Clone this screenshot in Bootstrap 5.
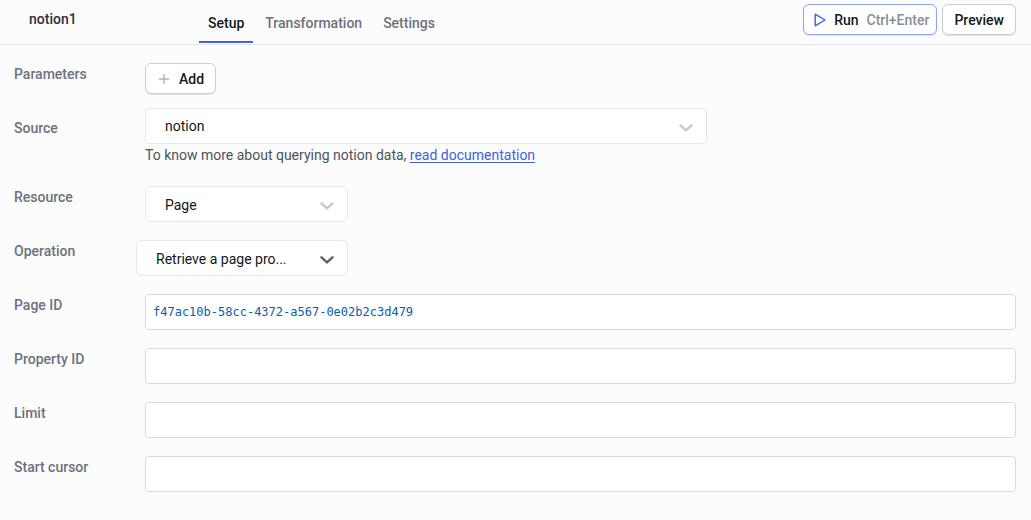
<!DOCTYPE html>
<html lang="en">
<head>
<meta charset="utf-8">
<meta name="viewport" content="width=device-width, initial-scale=1">
<title>notion1</title>
<link href="https://cdn.jsdelivr.net/npm/bootstrap@5.3.0/dist/css/bootstrap.min.css" rel="stylesheet">
<style>
  body { background: #fcfcfd; color: #11181c; font: 400 14px/20px Roboto, "Noto Sans", sans-serif; }
  .query-header { height: 45px; border-bottom: 1px solid #e2e5ea; padding: 0 15px 0 29px; }
  .query-name { width: 170px; margin-top: 9px; font-weight: 500; color: #2b2f38; }
  .query-tabs { gap: 3px; }
  .query-tabs .nav-link { padding: 13px 9px 8px; border-bottom: 2px solid transparent; color: #6a727c; font-weight: 500; }
  .query-tabs .nav-link.active { color: #11181c; border-color: #3e63dd; }
  .header-actions { gap: 5px; }
  .action-btn { height: 31px; background: #fff; border: 1px solid #c9ced4; border-radius: 6px; box-shadow: 0 1px 0 rgba(17, 24, 28, .1); color: #11181c; font-size: 14px; line-height: 20px; font-weight: 500; padding: 0 11px; }
  .action-btn.run-btn { border-color: #8da4ef; padding: 0 7px 0 10px; }
  .shortcut { color: #889096; }
  .query-form { padding: 18px 15px 18px 14px; }
  .field-row + .field-row { margin-top: 18px; }
  .field-row.source-row { margin-top: 14px; }
  .field-label { width: 131px; color: #6a727c; font-weight: 500; padding-top: 1px; }
  .source-row .field-label { padding-top: 10px; }
  .field-box.form-control, .field-box.form-select { height: 36px; border: 1px solid #d7dbdf; border-radius: 4px; background-color: #fff; font-size: 14px; line-height: 20px; color: #11181c; }
  .field-box.form-control { padding: 0 7px; color: #0b5cad; font-family: "DejaVu Sans Mono", monospace; font-size: 12px; }
  .field-box.form-select { border-color: #e6e8eb; border-radius: 6px; padding: 2px 40px 0 19px; background-position: right 13px top 15px; background-size: 14px 8px;
    background-image: url("data:image/svg+xml,%3Csvg xmlns='http://www.w3.org/2000/svg' viewBox='0 0 14 8'%3E%3Cpath d='M1.5 1.3 7 6.3l5.5-5' fill='none' stroke='%23c8c8c8' stroke-width='2.4' stroke-linecap='round'/%3E%3C/svg%3E"); }
  .field-box.form-select.select-source { max-width: 562px; padding-top: 0; border-radius: 4px; }
  .field-box.form-select.select-resource { width: 203px; }
  .field-box.form-select.select-operation { width: 212px; margin-left: -9px;
    background-image: url("data:image/svg+xml,%3Csvg xmlns='http://www.w3.org/2000/svg' viewBox='0 0 14 8'%3E%3Cpath d='M1.5 1.3 7 6.3l5.5-5' fill='none' stroke='%23616161' stroke-width='2.4' stroke-linecap='round'/%3E%3C/svg%3E"); }
  .source-help { margin-top: 1px; height: 23px; color: #4b535b; }
  .source-help a { color: #3e63dd; text-underline-offset: 2px; }
</style>
</head>
<body>
<header class="query-header d-flex">
  <div class="query-name">notion1</div>
  <nav class="query-tabs nav flex-nowrap align-items-start" aria-label="Query sections">
    <a class="nav-link active" aria-current="page" href="#setup">Setup</a>
    <a class="nav-link" href="#transformation">Transformation</a>
    <a class="nav-link" href="#settings">Settings</a>
  </nav>
  <div class="header-actions d-flex align-items-start ms-auto pt-1">
    <button type="button" class="action-btn run-btn d-flex align-items-center">
      <svg width="12" height="14" viewBox="0 0 12 14" fill="none" stroke="#3e63dd" stroke-width="1.4" stroke-linejoin="round" aria-hidden="true"><path d="M1.2 1.2v11.6L11 7z"/></svg>
      <span class="ms-2">Run</span><span class="shortcut ms-2">Ctrl+Enter</span>
    </button>
    <button type="button" class="action-btn">Preview</button>
  </div>
</header>
<main id="setup">
  <form class="query-form">
    <div class="field-row d-flex">
      <div class="field-label flex-shrink-0" id="params-label">Parameters</div>
      <button type="button" class="action-btn d-flex align-items-center" aria-describedby="params-label">
        <svg class="me-2" width="14" height="14" viewBox="0 0 14 14" stroke="#aeb3b8" stroke-width="1.4" aria-hidden="true"><path d="M7 2v10M2 7h10"/></svg>Add
      </button>
    </div>
    <div class="field-row source-row d-flex">
      <label class="field-label flex-shrink-0" for="source">Source</label>
      <div class="flex-grow-1">
        <select class="field-box form-select select-source" id="source"><option>notion</option></select>
        <div class="source-help">To know more about querying notion data, <a href="#docs">read documentation</a></div>
      </div>
    </div>
    <div class="field-row d-flex">
      <label class="field-label flex-shrink-0" for="resource">Resource</label>
      <select class="field-box form-select select-resource" id="resource"><option>Page</option></select>
    </div>
    <div class="field-row d-flex">
      <label class="field-label flex-shrink-0" for="operation">Operation</label>
      <select class="field-box form-select select-operation" id="operation"><option>Retrieve a page pro...</option></select>
    </div>
    <div class="field-row d-flex">
      <label class="field-label flex-shrink-0" for="page-id">Page ID</label>
      <input class="field-box form-control" id="page-id" type="text" value="f47ac10b-58cc-4372-a567-0e02b2c3d479">
    </div>
    <div class="field-row d-flex">
      <label class="field-label flex-shrink-0" for="property-id">Property ID</label>
      <input class="field-box form-control" id="property-id" type="text">
    </div>
    <div class="field-row d-flex">
      <label class="field-label flex-shrink-0" for="limit">Limit</label>
      <input class="field-box form-control" id="limit" type="text">
    </div>
    <div class="field-row d-flex">
      <label class="field-label flex-shrink-0" for="start-cursor">Start cursor</label>
      <input class="field-box form-control" id="start-cursor" type="text">
    </div>
  </form>
</main>
<script src="https://cdn.jsdelivr.net/npm/bootstrap@5.3.0/dist/js/bootstrap.bundle.min.js"></script>
</body>
</html>
